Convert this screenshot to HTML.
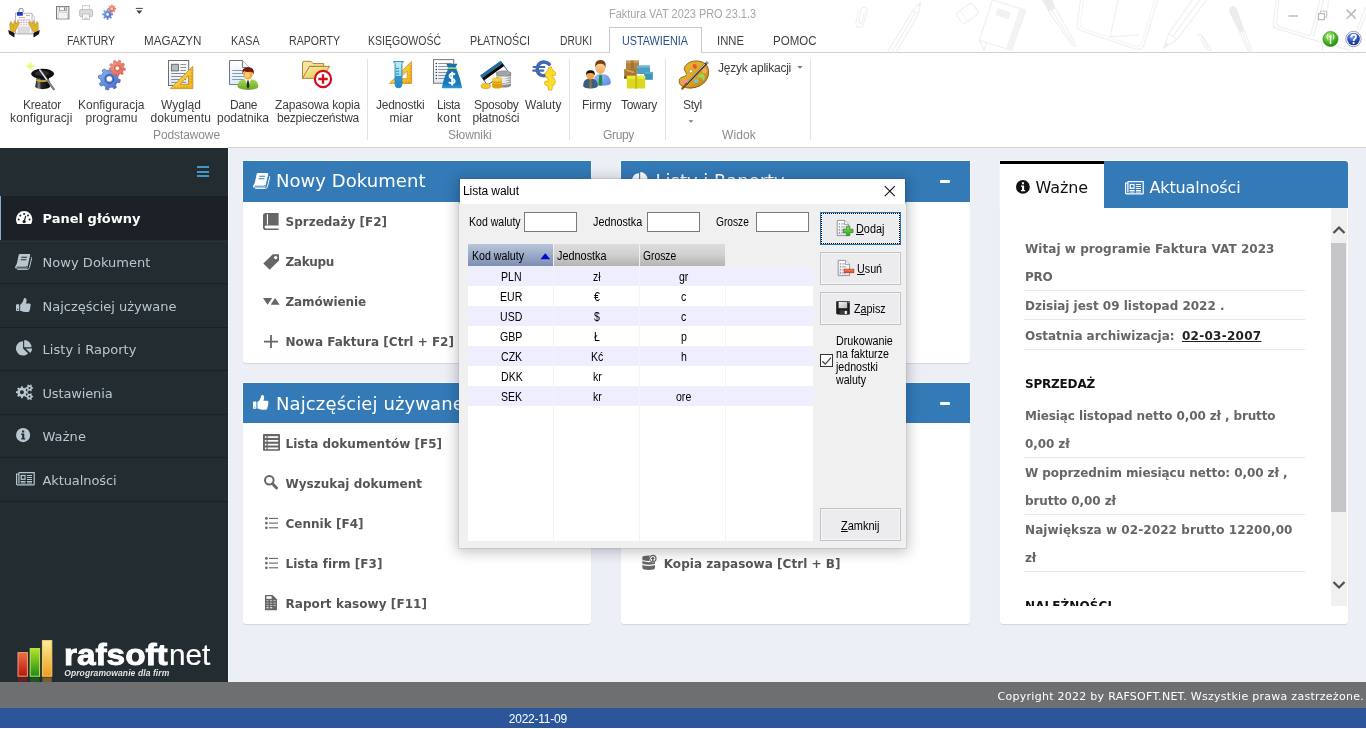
<!DOCTYPE html>
<html lang="pl">
<head>
<meta charset="utf-8">
<title>Faktura VAT 2023 PRO 23.1.3</title>
<style>
html,body{margin:0;padding:0}
body{width:1366px;height:729px;overflow:hidden;position:relative;background:#fff;font-family:"Liberation Sans",sans-serif;font-size:12px}
div,span,svg,i,b{position:absolute;box-sizing:border-box}
.t{white-space:nowrap;line-height:1}
.t u{position:static}
svg{overflow:visible}
#ribbon{left:0;top:0;width:1366px;height:148px;background:#fff}
#tabline{left:0;top:52px;width:1366px;height:1px;background:#d2d2d2}
#acttab{left:609px;top:27px;width:93px;height:26px;background:#fff;border:1px solid #c9c9c9;border-bottom:none}
.gsep{top:59px;width:1px;height:81px;background:#e2e2e2}
#ribbot{left:228px;top:147px;width:1138px;height:1px;background:#d4d4d4}
#side{left:0;top:148px;width:228px;height:534px;background:#222c31}
#side .act{left:0;top:48px;width:228px;height:44.4px;background:#1b2126;border-left:1.2px solid #86aec6}
#side .ln{left:0;width:228px;height:1px;background:#1a2226}
#side .bar{left:197px;width:12px;height:2px;background:#4596c6}
#main{left:228px;top:148px;width:1138px;height:534px;background:#edeff6;border-left:1px solid #f6f8fc}
#foot{left:0;top:682px;width:1366px;height:26px;background:#6e6f71}
#stat{left:0;top:708px;width:1366px;height:20px;background:#2b579a}
.box{background:#fff;border-radius:0 0 3px 3px;box-shadow:0 1px 1px rgba(0,0,0,.1)}
.bh{left:0;top:0;width:100%;height:41px;background:#337ab7;border-radius:0;box-shadow:0 -1px 0 rgba(255,255,255,.55),-1px 0 0 rgba(255,255,255,.4),1px 0 0 rgba(255,255,255,.4)}
.minus{top:18.6px;width:10px;height:3px;background:#fff;border-radius:1px}
.sep{left:1024px;width:281px;height:1px;background:#e6e6ea}
#dlg{left:459px;top:179px;width:447px;height:369px;background:linear-gradient(rgba(40,60,90,.35) 25px,#f0f0f0 25px);box-shadow:0 0 0 1px rgba(60,60,80,.10),0 2px 13px 2px rgba(0,0,20,.24)}
#dlg .tb{left:1px;top:0;width:445px;height:25px;background:#fff}
.inp{top:33px;width:53px;height:20px;background:#fff;border:1px solid #7a7a7a}
  .hd{top:65px;height:22px;width:85px;background:linear-gradient(#dcdcdc,#d2d2d2 45%,#b4b4b4);}
.hd.sel{background:linear-gradient(#bac6da,#9aaac6 50%,#7c8eb2)}
#grid{left:9px;top:87px;width:345px;height:275px;background:#fff;overflow:hidden}
.row{left:0;width:345px;height:20px;background:#eeeeff}
.vl{top:0;width:1px;height:275px;background:#f3f3f6}
.btn{left:361px;width:81px;height:33px;background:#ececee;border:1px solid #c2c2c6;box-shadow:inset 0 0 0 1px #f6f6f8}
.btn.foc{border:1px solid #1c74c4;box-shadow:none}
.btn.foc:after{content:"";position:absolute;left:0;top:0;right:0;bottom:0;border:1px dotted #000;background:none}

</style>
</head>
<body>
<div id="ribbon">
  <div id="tabline"></div>
  <div id="acttab"></div>
  <div class="gsep" style="left:367px"></div>
  <div class="gsep" style="left:569px"></div>
  <div class="gsep" style="left:665px"></div>
  <div class="gsep" style="left:810px"></div>
  <div id="ribbot"></div>
</div>
<div id="side">
  <div class="bar" style="top:18px"></div><div class="bar" style="top:22.5px"></div><div class="bar" style="top:27px"></div>
  <div class="act"></div>
  <div class="ln" style="top:93px;background:#2a343a"></div>
  <div class="ln" style="top:135px"></div>
  <div class="ln" style="top:179px"></div>
  <div class="ln" style="top:222px"></div>
  <div class="ln" style="top:266px"></div>
  <div class="ln" style="top:309px"></div>
  <div class="ln" style="top:353px"></div>
</div>
<div id="main"></div>
<div class="box" style="left:243px;top:161px;width:348px;height:202px"><div class="bh"></div></div>
<div class="box" style="left:243px;top:383px;width:348px;height:241px"><div class="bh" style="height:40px"></div></div>
<div class="box" style="left:621px;top:161px;width:349px;height:202px"><div class="bh"></div><div class="minus" style="left:319px"></div></div>
<div class="box" style="left:621px;top:383px;width:349px;height:241px"><div class="bh" style="height:40px"></div><div class="minus" style="left:319px"></div></div>
<div class="box" style="left:1000px;top:161px;width:348px;height:462.5px;background:#fff;border-radius:0 3px 3px 3px">
  <div class="bh" style="height:47px;border-radius:0 3px 0 0"></div>
  <div style="left:0;top:0;width:104px;height:47px;background:#fff;border-top:3px solid #000"></div>
  <div style="left:331px;top:47px;width:16px;height:398px;background:#f0f0f0"></div>
  <div style="left:331px;top:82px;width:15px;height:269px;background:#c6c6c9"></div>
</div>
<div class="sep" style="top:290px"></div>
<div class="sep" style="top:319px"></div>
<div class="sep" style="top:349px"></div>
<div class="sep" style="top:457px"></div>
<div class="sep" style="top:514px"></div>
<div class="sep" style="top:571px"></div>
<div id="foot"></div>
<div id="stat"></div>
<svg style="left:15.9px;top:211px" width="16.3" height="13" viewBox="0 0 16.3 13"><path d="M1.3,13 C0.45,11.7 0,10.1 0,8.2 A8.15,8.15 0 0 1 16.3,8.2 C16.3,10.1 15.85,11.7 15,13 Z" fill="#fff"/><g fill="#1b2126"><circle cx="2.7" cy="8.6" r="1"/><circle cx="4.3" cy="4.6" r="1"/><circle cx="8.15" cy="2.9" r="1"/><circle cx="12" cy="4.6" r="1"/><circle cx="13.6" cy="8.6" r="1"/><circle cx="8.15" cy="10.6" r="1.6"/></g><path d="M8.15,10.6 L9.6,5.4" stroke="#1b2126" stroke-width="1.2" stroke-linecap="round"/></svg>
<svg style="left:15.2px;top:254px" width="17" height="16" viewBox="0 0 17 16"><path d="M4.9,0 H14.4 Q15.5,0 15.2,1.1 L12.4,13.4 Q12.1,14.6 10.9,14.6 H1.2 Q-0.2,14.6 0.1,13.2 Q0.3,12.3 0.9,11.6 Q1.6,10.4 2,9 L3.6,1.2 Q3.9,0 4.9,0Z" fill="#b8c7ce"/><path d="M15.9,3.2 Q16.9,3.4 16.6,4.5 L14.4,13.6 Q14,15.4 12.2,15.4 H2.2" fill="none" stroke="#b8c7ce" stroke-width="1"/><path d="M6.3,3.3 H12 M5.7,5.8 H11.4" stroke="#222c31" stroke-width="1.1"/><path d="M1.6,13.2 H11.6 L12,12" stroke="#222c31" stroke-width="0.9" fill="none"/></svg>
<svg style="left:15.6px;top:298px" width="15.2" height="14.25" viewBox="0 0 16 15"><rect x="0" y="6.6" width="3.4" height="7.2" rx="0.5" fill="#b8c7ce"/><circle cx="1.7" cy="12" r="0.6" fill="#222c31"/><path d="M4.4,7 C6,6.6 7.6,3.6 8,1.4 Q8.3,0 9.6,0.1 Q11.1,0.4 11.2,2.2 Q11.2,4 10.3,5.8 H14.2 Q15.5,5.9 15.6,7.2 Q15.5,8 15.1,8.5 Q15.5,9.4 14.9,10.3 Q15.2,11.3 14.5,12.1 Q14.7,13.2 14,13.9 Q13.3,14.8 11.6,14.8 H9.6 Q7.4,14.7 5.6,13.8 L4.4,13.6Z" fill="#b8c7ce"/></svg>
<svg style="left:15.8px;top:339.7px" width="16.5" height="16" viewBox="0 0 16.5 16"><path d="M7.1,1.3 V8.4 L12.1,13.4 A7.1,7.1 0 1 1 7.1,1.3Z" fill="#b8c7ce"/><path d="M8.2,0 A7.3,7.3 0 0 1 15.5,7.3 H8.2Z" fill="#b8c7ce"/><path d="M9.6,8.4 H16.2 A7,7 0 0 1 14.2,13Z" fill="#b8c7ce"/></svg>
<svg style="left:15.8px;top:383.6px" width="17.5" height="16.5" viewBox="0 0 17.5 16.5"><path d="M10.40,7.23 L11.84,7.35 L11.84,9.05 L10.40,9.17 L9.76,10.70 L10.70,11.80 L9.50,13.00 L8.40,12.06 L6.87,12.70 L6.75,14.14 L5.05,14.14 L4.93,12.70 L3.40,12.06 L2.30,13.00 L1.10,11.80 L2.04,10.70 L1.40,9.17 L-0.04,9.05 L-0.04,7.35 L1.40,7.23 L2.04,5.70 L1.10,4.60 L2.30,3.40 L3.40,4.34 L4.93,3.70 L5.05,2.26 L6.75,2.26 L6.87,3.70 L8.40,4.34 L9.50,3.40 L10.70,4.60 L9.76,5.70Z M3.90,8.20 a2.0,2.0 0 1 0 4.0,0 a2.0,2.0 0 1 0 -4.0,0Z" fill="#b8c7ce" fill-rule="evenodd"/><path d="M16.09,3.15 L17.13,3.21 L17.13,4.59 L16.09,4.65 L15.45,5.77 L15.92,6.70 L14.72,7.39 L14.14,6.52 L12.86,6.52 L12.28,7.39 L11.08,6.70 L11.55,5.77 L10.91,4.65 L9.87,4.59 L9.87,3.21 L10.91,3.15 L11.55,2.03 L11.08,1.10 L12.28,0.41 L12.86,1.28 L14.14,1.28 L14.72,0.41 L15.92,1.10 L15.45,2.03Z M12.50,3.90 a1.0,1.0 0 1 0 2.0,0 a1.0,1.0 0 1 0 -2.0,0Z" fill="#b8c7ce" fill-rule="evenodd"/><path d="M16.09,11.85 L17.13,11.91 L17.13,13.29 L16.09,13.35 L15.45,14.47 L15.92,15.40 L14.72,16.09 L14.14,15.22 L12.86,15.22 L12.28,16.09 L11.08,15.40 L11.55,14.47 L10.91,13.35 L9.87,13.29 L9.87,11.91 L10.91,11.85 L11.55,10.73 L11.08,9.80 L12.28,9.11 L12.86,9.98 L14.14,9.98 L14.72,9.11 L15.92,9.80 L15.45,10.73Z M12.50,12.60 a1.0,1.0 0 1 0 2.0,0 a1.0,1.0 0 1 0 -2.0,0Z" fill="#b8c7ce" fill-rule="evenodd"/></svg>
<svg style="left:15.9px;top:427.9px" width="14.2" height="14.2" viewBox="0 0 14.2 14.2"><circle cx="7.1" cy="7.1" r="7.1" fill="#b8c7ce"/><path d="M6.1,2.3999999999999995 h2.1 v2.1 h-2.1Z M5.199999999999999,5.6 h3.1 v4.6 h1 v1.3 h-4.1 v-1.3 h1 v-3.3 h-1Z" fill="#222c31"/></svg>
<svg style="left:16px;top:471.9px" width="19" height="13.5" viewBox="0 0 19 13.5"><path d="M2.9,0.6 H18.2 V12.2 Q18.2,12.8 17.6,12.8 H1.6 Q0.6,12.8 0.6,11.8 V2 H2.9" fill="none" stroke="#b8c7ce" stroke-width="1.2"/><path d="M2.9,0.6 V11.6" stroke="#b8c7ce" stroke-width="1.2"/><rect x="4.6" y="2.9" width="5" height="5" fill="#b8c7ce"/><rect x="5.9" y="4.1" width="2.6" height="2.5" fill="#222c31"/><path d="M10.9,3.5 H16 M10.9,5.5 H16 M10.9,7.5 H16 M4.6,9.5 H9.6 M10.9,9.5 H16 M4.6,11 H9.6 M10.9,11 H16" stroke="#b8c7ce" stroke-width="1"/></svg>
<svg style="left:252.6px;top:172.6px" width="17" height="16" viewBox="0 0 17 16"><path d="M4.9,0 H14.4 Q15.5,0 15.2,1.1 L12.4,13.4 Q12.1,14.6 10.9,14.6 H1.2 Q-0.2,14.6 0.1,13.2 Q0.3,12.3 0.9,11.6 Q1.6,10.4 2,9 L3.6,1.2 Q3.9,0 4.9,0Z" fill="#fff"/><path d="M15.9,3.2 Q16.9,3.4 16.6,4.5 L14.4,13.6 Q14,15.4 12.2,15.4 H2.2" fill="none" stroke="#fff" stroke-width="1"/><path d="M6.3,3.3 H12 M5.7,5.8 H11.4" stroke="#337ab7" stroke-width="1.1"/><path d="M1.6,13.2 H11.6 L12,12" stroke="#337ab7" stroke-width="0.9" fill="none"/></svg>
<svg style="left:252.8px;top:394.9px" width="16" height="15" viewBox="0 0 16 15"><rect x="0" y="6.6" width="3.4" height="7.2" rx="0.5" fill="#fff"/><circle cx="1.7" cy="12" r="0.6" fill="#337ab7"/><path d="M4.4,7 C6,6.6 7.6,3.6 8,1.4 Q8.3,0 9.6,0.1 Q11.1,0.4 11.2,2.2 Q11.2,4 10.3,5.8 H14.2 Q15.5,5.9 15.6,7.2 Q15.5,8 15.1,8.5 Q15.5,9.4 14.9,10.3 Q15.2,11.3 14.5,12.1 Q14.7,13.2 14,13.9 Q13.3,14.8 11.6,14.8 H9.6 Q7.4,14.7 5.6,13.8 L4.4,13.6Z" fill="#fff"/></svg>
<svg style="left:632.2px;top:171.7px" width="16.5" height="16" viewBox="0 0 16.5 16"><path d="M7.1,1.3 V8.4 L12.1,13.4 A7.1,7.1 0 1 1 7.1,1.3Z" fill="#fff"/><path d="M8.2,0 A7.3,7.3 0 0 1 15.5,7.3 H8.2Z" fill="#fff"/><path d="M9.6,8.4 H16.2 A7,7 0 0 1 14.2,13Z" fill="#fff"/></svg>
<svg style="left:631px;top:394.6px" width="17.5" height="16.5" viewBox="0 0 17.5 16.5"><path d="M10.40,7.23 L11.84,7.35 L11.84,9.05 L10.40,9.17 L9.76,10.70 L10.70,11.80 L9.50,13.00 L8.40,12.06 L6.87,12.70 L6.75,14.14 L5.05,14.14 L4.93,12.70 L3.40,12.06 L2.30,13.00 L1.10,11.80 L2.04,10.70 L1.40,9.17 L-0.04,9.05 L-0.04,7.35 L1.40,7.23 L2.04,5.70 L1.10,4.60 L2.30,3.40 L3.40,4.34 L4.93,3.70 L5.05,2.26 L6.75,2.26 L6.87,3.70 L8.40,4.34 L9.50,3.40 L10.70,4.60 L9.76,5.70Z M3.90,8.20 a2.0,2.0 0 1 0 4.0,0 a2.0,2.0 0 1 0 -4.0,0Z" fill="#fff" fill-rule="evenodd"/><path d="M16.09,3.15 L17.13,3.21 L17.13,4.59 L16.09,4.65 L15.45,5.77 L15.92,6.70 L14.72,7.39 L14.14,6.52 L12.86,6.52 L12.28,7.39 L11.08,6.70 L11.55,5.77 L10.91,4.65 L9.87,4.59 L9.87,3.21 L10.91,3.15 L11.55,2.03 L11.08,1.10 L12.28,0.41 L12.86,1.28 L14.14,1.28 L14.72,0.41 L15.92,1.10 L15.45,2.03Z M12.50,3.90 a1.0,1.0 0 1 0 2.0,0 a1.0,1.0 0 1 0 -2.0,0Z" fill="#fff" fill-rule="evenodd"/><path d="M16.09,11.85 L17.13,11.91 L17.13,13.29 L16.09,13.35 L15.45,14.47 L15.92,15.40 L14.72,16.09 L14.14,15.22 L12.86,15.22 L12.28,16.09 L11.08,15.40 L11.55,14.47 L10.91,13.35 L9.87,13.29 L9.87,11.91 L10.91,11.85 L11.55,10.73 L11.08,9.80 L12.28,9.11 L12.86,9.98 L14.14,9.98 L14.72,9.11 L15.92,9.80 L15.45,10.73Z M12.50,12.60 a1.0,1.0 0 1 0 2.0,0 a1.0,1.0 0 1 0 -2.0,0Z" fill="#fff" fill-rule="evenodd"/></svg>
<svg style="left:263.2px;top:212.9px" width="15.6" height="17" viewBox="0 0 15.6 17"><path d="M3,0 H15.6 V12.6 H3 Q1.6,12.6 1.6,14.3 Q1.6,15.4 3,15.4 H15.6 V17 H2.6 Q0,17 0,14.2 V2.8 Q0,0 3,0Z" fill="#666"/><rect x="3.9" y="1.2" width="1.1" height="10.4" fill="#fff"/></svg>
<svg style="left:262.6px;top:253.8px" width="16.2" height="16" viewBox="0 0 16.2 16"><path d="M9.8,0.2 H15.4 Q16,0.2 16,0.8 V6.4 L6.7,15.7 L0.3,9.5Z" fill="#666"/><circle cx="12.6" cy="3.6" r="1.7" fill="#fff"/></svg>
<svg style="left:262.8px;top:298.3px" width="16.6" height="7" viewBox="0 0 16.6 7"><path d="M0,0 H9.2 L4.6,6.8Z M7.7,6.8 H16.6 L12.1,0Z" fill="#666"/></svg>
<svg style="left:264px;top:335px" width="14" height="13" viewBox="0 0 14 13"><path d="M7,0 V13 M0,6.7 H14" stroke="#666" stroke-width="1.8" fill="none"/></svg>
<svg style="left:262.6px;top:434px" width="17" height="16.8" viewBox="0 0 17 16.8"><rect x="0" y="0" width="17" height="16.8" rx="0.8" fill="#666"/><rect x="1.9" y="2.2" width="1.6" height="1.7" fill="#fff"/><rect x="4.7" y="2.2" width="10.5" height="1.7" fill="#fff"/><rect x="1.9" y="6.0" width="1.6" height="1.7" fill="#fff"/><rect x="4.7" y="6.0" width="10.5" height="1.7" fill="#fff"/><rect x="1.9" y="9.8" width="1.6" height="1.7" fill="#fff"/><rect x="4.7" y="9.8" width="10.5" height="1.7" fill="#fff"/><rect x="1.9" y="13.5" width="1.6" height="1.7" fill="#fff"/><rect x="4.7" y="13.5" width="10.5" height="1.7" fill="#fff"/></svg>
<svg style="left:264px;top:475.2px" width="14" height="14.5" viewBox="0 0 14 14.5"><circle cx="5.3" cy="5.3" r="4.3" fill="none" stroke="#666" stroke-width="2"/><path d="M8.6,8.8 L12.6,13" stroke="#666" stroke-width="2.8" stroke-linecap="round"/></svg>
<svg style="left:265px;top:516.8px" width="13" height="12.2" viewBox="0 0 13 12.2"><circle cx="1.4" cy="1.4" r="1.35" fill="#666"/><path d="M4,1.4 H13" stroke="#666" stroke-width="1.1"/><circle cx="1.4" cy="6.1" r="1.35" fill="#666"/><path d="M4,6.1 H13" stroke="#666" stroke-width="1.1"/><circle cx="1.4" cy="10.8" r="1.35" fill="#666"/><path d="M4,10.8 H13" stroke="#666" stroke-width="1.1"/></svg>
<svg style="left:265px;top:556.8px" width="13" height="12.2" viewBox="0 0 13 12.2"><circle cx="1.4" cy="1.4" r="1.35" fill="#666"/><path d="M4,1.4 H13" stroke="#666" stroke-width="1.1"/><circle cx="1.4" cy="6.1" r="1.35" fill="#666"/><path d="M4,6.1 H13" stroke="#666" stroke-width="1.1"/><circle cx="1.4" cy="10.8" r="1.35" fill="#666"/><path d="M4,10.8 H13" stroke="#666" stroke-width="1.1"/></svg>
<svg style="left:265px;top:594.8px" width="12" height="15.2" viewBox="0 0 12 15.2"><path d="M0.6,0 H7.6 L12,4.2 V14.6 Q12,15.2 11.4,15.2 H0.6 Q0,15.2 0,14.6 V0.6 Q0,0 0.6,0Z" fill="#666"/><rect x="1.4" y="1.3" width="5.2" height="2.5" fill="#fff"/><rect x="1.4" y="5.0" width="2.2" height="1.1" fill="#fff" opacity="0.55"/><rect x="5.0" y="5.0" width="2.2" height="1.1" fill="#fff" opacity="0.55"/><rect x="8.5" y="5.0" width="2.2" height="1.1" fill="#fff" opacity="0.55"/><rect x="1.4" y="7.6" width="2.2" height="1.1" fill="#fff" opacity="0.55"/><rect x="5.0" y="7.6" width="2.2" height="1.1" fill="#fff" opacity="0.55"/><rect x="8.5" y="7.6" width="2.2" height="1.1" fill="#fff" opacity="0.55"/><rect x="1.4" y="10.0" width="2.2" height="1.1" fill="#fff" opacity="0.55"/><rect x="5.0" y="10.0" width="2.2" height="1.1" fill="#fff" opacity="0.55"/><rect x="8.5" y="10.0" width="2.2" height="1.1" fill="#fff" opacity="0.55"/><rect x="1.4" y="12.2" width="2.2" height="1.1" fill="#fff" opacity="0.9"/><rect x="5.0" y="12.2" width="2.2" height="1.1" fill="#fff" opacity="0.9"/></svg>
<svg style="left:642.4px;top:554.6px" width="14.6" height="15.2" viewBox="0 0 14.6 15.2"><path d="M0.4,2.2 Q0.4,0.4 6.6,0.4 Q13,0.4 13,2.2 V12.8 Q13,15 6.6,15 Q0.4,15 0.4,12.8Z" fill="#666"/><path d="M0.4,5.6 Q6.6,7.6 13,5.6 M0.4,9.4 Q6.6,11.4 13,9.4" stroke="#fff" stroke-width="1.1" fill="none"/><circle cx="10.8" cy="3.6" r="3.9" fill="#fff"/><circle cx="10.8" cy="3.6" r="3.2" fill="none" stroke="#666" stroke-width="1.2"/><path d="M10.8,1.5 L13,3.9 H11.6 V5.9 H10 V3.9 H8.6Z" fill="#666"/></svg>
<svg style="left:1015.5px;top:180px" width="13.8" height="13.8" viewBox="0 0 13.8 13.8"><circle cx="6.9" cy="6.9" r="6.9" fill="#111"/><path d="M5.9,2.2 h2.1 v2.1 h-2.1Z M5.0,5.4 h3.1 v4.6 h1 v1.3 h-4.1 v-1.3 h1 v-3.3 h-1Z" fill="#fff"/></svg>
<svg style="left:1125px;top:180.6px" width="19" height="13.5" viewBox="0 0 19 13.5"><path d="M2.9,0.6 H18.2 V12.2 Q18.2,12.8 17.6,12.8 H1.6 Q0.6,12.8 0.6,11.8 V2 H2.9" fill="none" stroke="#fff" stroke-width="1.2"/><path d="M2.9,0.6 V11.6" stroke="#fff" stroke-width="1.2"/><rect x="4.6" y="2.9" width="5" height="5" fill="#fff"/><rect x="5.9" y="4.1" width="2.6" height="2.5" fill="#337ab7"/><path d="M10.9,3.5 H16 M10.9,5.5 H16 M10.9,7.5 H16 M4.6,9.5 H9.6 M10.9,9.5 H16 M4.6,11 H9.6 M10.9,11 H16" stroke="#fff" stroke-width="1"/></svg>
<svg style="left:1332px;top:225px" width="14" height="10" viewBox="0 0 14 10"><path d="M1.5,8 L7,2.5 L12.5,8" fill="none" stroke="#505050" stroke-width="2.2"/></svg>
<svg style="left:1332px;top:580px" width="14" height="10" viewBox="0 0 14 10"><path d="M1.5,2 L7,7.5 L12.5,2" fill="none" stroke="#505050" stroke-width="2.2"/></svg>
<svg style="left:0px;top:0px" width="1366" height="52" viewBox="0 0 1366 52"><path d="M858.4,9.4 L856,22.6 Q855.6,27.6 859.4,27.8 Q862.6,27.6 863.6,23.6 L867.2,10.6 Q867.6,7.4 864.6,7 Q861.6,7 861,10 L858.8,21.6 Q858.8,23.8 860.4,23.8 Q861.8,23.6 862.2,21.8 L864.4,12" fill="none" stroke="#efefef" stroke-width="1.1" stroke-linecap="round" stroke-linejoin="round"/><path d="M920.6,2.2 L912.6,11 L887.6,52 M920.6,2.2 L918.6,13.6 L896.4,52 M912.6,11 L918.6,13.6 M915.6,12.2 L892,52" fill="none" stroke="#efefef" stroke-width="1.1" stroke-linecap="round" stroke-linejoin="round"/><path d="M920.6,2.2 L917.6,5.6 L919.8,6.6 Z" fill="#ededed"/><g transform="rotate(-35 967.4 13.4)"><rect x="957.6" y="6.8" width="19.6" height="13.2" rx="3" fill="none" stroke="#efefef" stroke-width="1.1" stroke-linecap="round" stroke-linejoin="round"/><path d="M963,6.8 V20" fill="none" stroke="#f3f3f3" stroke-width="1" stroke-linecap="round" stroke-linejoin="round"/></g><path d="M992.4,0 L979.2,40.2 L1011.8,50.6 L1025.4,10.2 L994,0.4" fill="none" stroke="#efefef" stroke-width="1.1" stroke-linecap="round" stroke-linejoin="round"/><path d="M1019.6,8.4 L1025.4,10.2 L1011.8,50.6 L1006,48.8 Z" fill="#f3f3f3"/><path d="M997.6,8 L1010.6,12.2 L1008.8,19.4 L995.6,15 Z" fill="#f2f2f2"/><path d="M979.2,40.2 L984,50.4 L986.6,42.6" fill="none" stroke="#efefef" stroke-width="1.1" stroke-linecap="round" stroke-linejoin="round"/><path d="M1042,0 L1052.4,0 L1055.6,8.6 L1048.6,11.6 Z" fill="#ececec"/><path d="M1048.6,11.6 L1071.4,44 L1075.4,46.6 L1074.4,41.6 L1055.6,8.6 M1051.6,10.2 L1073,43" fill="none" stroke="#efefef" stroke-width="1.1" stroke-linecap="round" stroke-linejoin="round"/><path d="M1020,8 L1025.6,12 L1020.6,26" fill="none" stroke="#f3f3f3" stroke-width="1" stroke-linecap="round" stroke-linejoin="round"/><path d="M1080.4,0 L1077.2,25 Q1076.8,29.4 1081,30.6 L1135.6,49 Q1141.6,50.6 1144,45 L1157.6,0" fill="none" stroke="#efefef" stroke-width="1.1" stroke-linecap="round" stroke-linejoin="round"/><path d="M1083.4,0 L1080.4,24.6 Q1080.2,27.6 1083.4,28.6 L1135.4,46 Q1140,47.2 1141.8,43 L1154.6,0" fill="none" stroke="#f3f3f3" stroke-width="1" stroke-linecap="round" stroke-linejoin="round"/><path d="M1118,0 L1110.2,36.8 M1110.2,36.8 L1138,35" fill="none" stroke="#efefef" stroke-width="1.1" stroke-linecap="round" stroke-linejoin="round"/><path d="M1192.4,0 L1168.6,33.6 L1163.4,48.4 L1176.8,39.8 L1206.6,0 M1168.6,33.6 L1176.8,39.8 M1199.6,0 L1172.8,36.6" fill="none" stroke="#efefef" stroke-width="1.1" stroke-linecap="round" stroke-linejoin="round"/><path d="M1163.4,48.4 L1165.6,42 L1169.4,44.6 Z" fill="#ededed"/><path d="M1198,36 Q1196.4,33.8 1199.4,34.2 Q1202,34.6 1204,38 L1210.6,48.6 Q1211.4,50.8 1209,50.4 Q1206.8,50 1205.2,47.4 L1200,38.6 M1201.6,36.6 L1208,47.6" fill="none" stroke="#efefef" stroke-width="1.1" stroke-linecap="round" stroke-linejoin="round"/><path d="M1229.4,8.6 Q1230.6,5.4 1234,6.2 Q1236.6,7 1237.6,10.4 L1244.6,31 L1239.6,33 L1229.8,13.6 Q1228.8,11 1229.4,8.6 Z" fill="#ececec"/><path d="M1239.6,33 L1248.8,52 M1244.6,31 L1252.4,52 M1242,32 L1250.4,52" fill="none" stroke="#efefef" stroke-width="1.1" stroke-linecap="round" stroke-linejoin="round"/><path d="M1276,0 L1273.4,24 Q1273.2,27.4 1276.6,28.6 L1322,42.4 L1350,50.4 M1278.8,0 L1276.4,23.6 Q1276.4,25.6 1278.6,26.4 L1310.4,36 L1320,0 M1313.4,36.6 L1323.4,0 M1322,42.4 L1322.6,52 M1328.4,0 L1327,20 M1366,14 L1352,50 M1366,6 L1349.6,48.6" fill="none" stroke="#efefef" stroke-width="1.1" stroke-linecap="round" stroke-linejoin="round"/></svg>
<svg style="left:0px;top:0px" width="1366" height="148" viewBox="0 0 1366 148"><defs>
<linearGradient id="gBlue" x1="0" y1="0" x2="1" y2="1"><stop offset="0" stop-color="#8cc4f0"/><stop offset=".5" stop-color="#5f8fdc"/><stop offset="1" stop-color="#4a5fc0"/></linearGradient>
<linearGradient id="gRed" x1="0" y1="0" x2="1" y2="1"><stop offset="0" stop-color="#f4a090"/><stop offset="1" stop-color="#e0604c"/></linearGradient>
<linearGradient id="gPaper" x1="0" y1="0" x2="0" y2="1"><stop offset="0" stop-color="#ffffff"/><stop offset="1" stop-color="#dfeaf6"/></linearGradient>
<linearGradient id="gYel" x1="0" y1="0" x2="1" y2="1"><stop offset="0" stop-color="#fbe070"/><stop offset="1" stop-color="#eeb410"/></linearGradient>
<linearGradient id="gFold" x1="0" y1="0" x2="1" y2="1"><stop offset="0" stop-color="#fbeeb0"/><stop offset="1" stop-color="#f0bf3c"/></linearGradient>
<linearGradient id="gHat" x1="0" y1="0" x2="1" y2="0"><stop offset="0" stop-color="#0c0c0c"/><stop offset=".25" stop-color="#8a8a8a"/><stop offset=".4" stop-color="#2a2a2a"/><stop offset="1" stop-color="#050505"/></linearGradient>
<linearGradient id="gTube" x1="0" y1="0" x2="0" y2="1"><stop offset="0" stop-color="#c8ecfa"/><stop offset=".55" stop-color="#8fd8f4"/><stop offset=".56" stop-color="#2f97d8"/><stop offset="1" stop-color="#2a86c4"/></linearGradient>
<linearGradient id="gBag" x1="0" y1="0" x2="0" y2="1"><stop offset="0" stop-color="#1c6ea8"/><stop offset=".8" stop-color="#1a7cbc"/><stop offset="1" stop-color="#2c9ad8"/></linearGradient>
<linearGradient id="gSil" x1="0" y1="0" x2="1" y2="0"><stop offset="0" stop-color="#8a8a8a"/><stop offset=".5" stop-color="#e8e8e8"/><stop offset="1" stop-color="#7c7c7c"/></linearGradient>
<linearGradient id="gGold" x1="0" y1="0" x2="0" y2="1"><stop offset="0" stop-color="#f8d040"/><stop offset="1" stop-color="#e0a010"/></linearGradient>
<linearGradient id="gFace" x1="0" y1="0" x2="0" y2="1"><stop offset="0" stop-color="#fbe0b0"/><stop offset="1" stop-color="#f2a654"/></linearGradient>
<linearGradient id="gShirt" x1="0" y1="0" x2="1" y2="1"><stop offset="0" stop-color="#9cc0f4"/><stop offset="1" stop-color="#5c8ae4"/></linearGradient>
<linearGradient id="gGreen" x1="0" y1="0" x2="0" y2="1"><stop offset="0" stop-color="#a8d858"/><stop offset="1" stop-color="#6aa828"/></linearGradient>
<radialGradient id="gGrnBall" cx=".4" cy=".3" r=".8"><stop offset="0" stop-color="#b8f080"/><stop offset=".5" stop-color="#4cb828"/><stop offset="1" stop-color="#1c7a10"/></radialGradient>
<radialGradient id="gBluBall" cx=".4" cy=".3" r=".8"><stop offset="0" stop-color="#88a8f0"/><stop offset=".5" stop-color="#2c50c0"/><stop offset="1" stop-color="#142c80"/></radialGradient>
<linearGradient id="gPal" x1="0" y1="0" x2="1" y2="1"><stop offset="0" stop-color="#e8b838"/><stop offset=".5" stop-color="#e0a828"/><stop offset="1" stop-color="#b87818"/></linearGradient>
</defs><path d="M19,12 V10.4 A2.1,2.1 0 0 1 23.2,10.4 V12" fill="none" stroke="#8a8a8a" stroke-width="1"/><path d="M18.2,14.5 H32 L34.6,16.8 V34 H17 Z" fill="#f4f4f4" stroke="#b0b0b0" stroke-width=".6"/><rect x="15.4" y="13.2" width="16.6" height="20.6" fill="#fff" stroke="#9a9aa8" stroke-width=".7"/><rect x="17" y="12" width="5.8" height="3.8" rx=".5" fill="#1c3ccc"/><path d="M19,17.6 H25 M26,15.6 H30" stroke="#9a9a9a" stroke-width=".8"/><rect x="17.4" y="19.4" width="12.8" height="7" fill="#d8b0c8"/><path d="M17.4,21.4 H30.2 M17.4,23.4 H30.2 M17.4,25.2 H30.2 M20,19.4 V26.4 M22.6,19.4 V26.4 M25.2,19.4 V26.4 M27.8,19.4 V26.4" stroke="#fff" stroke-width=".9"/><path d="M17.4,28 H30 M17.4,30 H30 M17.4,32 H30" stroke="#b8b8b8" stroke-width="1"/><path d="M10.2,31.6 L9.8,24 Q10,21.6 11.6,21.8 L13,26 L14.4,20.4 L16,24 L17.6,21.4 L19.6,22.6 L15.8,30 L14,32.4 Z" fill="#e0b428" stroke="#a8821c" stroke-width=".5"/><path d="M38,31.6 L38.2,24 Q38,21.6 36.6,21.8 L35.2,26 L33.8,20.4 L32.2,24 L30.4,21.4 L28.4,22.6 L32.2,30 L34,32.4 Z" fill="#e0b428" stroke="#a8821c" stroke-width=".5"/><path d="M8.2,30 L14.6,33 L14.4,37.6 L9,34 Z" fill="#141414"/><path d="M39.8,30 L33.4,33 L33.6,37.6 L39,34 Z" fill="#141414"/><rect x="56.5" y="6.5" width="12.4" height="12.4" fill="#e8e8e8" stroke="#7c7c7c" stroke-width="1"/><rect x="59.4" y="6.9" width="7" height="3.8" fill="#fdfdfd" stroke="#8c8c8c" stroke-width=".7"/><rect x="64" y="7.4" width="1.3" height="2.8" fill="#8a8a8a"/><rect x="58.4" y="12.6" width="8.8" height="6" fill="#f4f4f4" stroke="#c8c8c8" stroke-width=".5"/><rect x="82.6" y="5.4" width="7" height="5" fill="#fbfbfb" stroke="#c4c4c4" stroke-width=".8"/><rect x="79.6" y="9.6" width="13" height="7" rx="1.4" fill="#dcdcdc" stroke="#b4b4b4" stroke-width=".8"/><rect x="82.6" y="14" width="7" height="5.4" fill="#f8f8f8" stroke="#b8b8b8" stroke-width=".8"/><path d="M84,19 L86,16.4 L88,19" fill="#d0d0d0"/><path d="M111.14,13.77 L112.76,13.79 L112.76,15.01 L111.14,15.03 L110.55,16.46 L111.68,17.62 L110.82,18.48 L109.66,17.35 L108.23,17.94 L108.21,19.56 L106.99,19.56 L106.97,17.94 L105.54,17.35 L104.38,18.48 L103.52,17.62 L104.65,16.46 L104.06,15.03 L102.44,15.01 L102.44,13.79 L104.06,13.77 L104.65,12.34 L103.52,11.18 L104.38,10.32 L105.54,11.45 L106.97,10.86 L106.99,9.24 L108.21,9.24 L108.23,10.86 L109.66,11.45 L110.82,10.32 L111.68,11.18 L110.55,12.34Z M106.00,14.40 a1.6,1.6 0 1 0 3.2,0 a1.6,1.6 0 1 0 -3.2,0Z" fill="url(#gBlue)" fill-rule="evenodd" stroke="#4c64c0" stroke-width=".4"/><path d="M114.56,8.33 L115.87,8.33 L115.87,9.27 L114.56,9.27 L114.12,10.34 L115.04,11.28 L114.38,11.94 L113.44,11.02 L112.37,11.46 L112.37,12.77 L111.43,12.77 L111.43,11.46 L110.36,11.02 L109.42,11.94 L108.76,11.28 L109.68,10.34 L109.24,9.27 L107.93,9.27 L107.93,8.33 L109.24,8.33 L109.68,7.26 L108.76,6.32 L109.42,5.66 L110.36,6.58 L111.43,6.14 L111.43,4.83 L112.37,4.83 L112.37,6.14 L113.44,6.58 L114.38,5.66 L115.04,6.32 L114.12,7.26Z M110.70,8.80 a1.2,1.2 0 1 0 2.4,0 a1.2,1.2 0 1 0 -2.4,0Z" fill="url(#gRed)" fill-rule="evenodd" stroke="#d86050" stroke-width=".4"/><path d="M135.8,8.4 H142.8" stroke="#444" stroke-width="1"/><path d="M136.3,10.6 H142.3 L139.3,14 Z" fill="#444"/><path d="M1288.5,16 H1298" stroke="#bababa" stroke-width="1.4"/><path d="M1320.5,13.2 V11.2 H1326.5 V17.2 H1324.5" fill="none" stroke="#c4c4c4" stroke-width="1"/><rect x="1318.4" y="13.6" width="6" height="6" fill="none" stroke="#bababa" stroke-width="1.2"/><path d="M1346.6,9.6 L1355.8,18.8 M1355.8,9.6 L1346.6,18.8" stroke="#bababa" stroke-width="1.5"/><circle cx="1330.5" cy="39" r="7.6" fill="url(#gGrnBall)" stroke="#2c8a1c" stroke-width=".6"/><path d="M1330.5,37 V44" stroke="#fff" stroke-width="1.5"/><circle cx="1330.5" cy="36.4" r="1.1" fill="#fff"/><path d="M1327.8,34.4 Q1326.2,36.8 1327.8,39.4 M1333.2,34.4 Q1334.8,36.8 1333.2,39.4" stroke="#fff" stroke-width="1" fill="none"/><circle cx="1353.5" cy="39" r="7.7" fill="#fff" stroke="#98a0c4" stroke-width="1"/><circle cx="1353.5" cy="39" r="6.3" fill="url(#gBluBall)"/><path d="M1351.2,37 Q1351.2,34.2 1353.6,34.2 Q1356,34.2 1356,36.4 Q1356,37.8 1354.6,38.6 Q1353.6,39.2 1353.6,40.6" stroke="#fff" stroke-width="1.8" fill="none" transform="translate(0,.4)"/><circle cx="1353.6" cy="43" r="1.1" fill="#fff"/><path d="M688.6,120.2 H693.4 L691,122.8 Z" fill="#777"/><path d="M797.4,66 H802.6 L800,68.8 Z" fill="#777"/><path d="M30.5,61.6 L31.6,65 L35,66.2 L31.6,67.4 L30.5,70.8 L29.4,67.4 L26,66.2 L29.4,65 Z" fill="#e4f060" opacity=".95"/><circle cx="30.5" cy="66.2" r="3.4" fill="#f4fa90" opacity=".5"/><path d="M33,63 L33.5,64.6 L35.2,65.1 L33.5,65.6 L33,67.2" fill="#eef888" opacity=".6"/><path d="M36.6,77.6 L35.3,86.6 Q35.6,88.8 42.6,89.2 Q49.6,88.8 50,86.6 L48.8,77.6 Z" fill="url(#gHat)"/><path d="M36.4,79.2 Q42.6,81.2 49,79.2 L49.2,81 Q42.6,83 36.2,81 Z" fill="#ccb030"/><ellipse cx="42.6" cy="73.8" rx="11.5" ry="5.1" fill="#101010"/><ellipse cx="42" cy="73.4" rx="7" ry="2.6" fill="#2e2e2e"/><path d="M39.6,69.6 L54.2,89.8" stroke="#555" stroke-width="2"/><path d="M39.4,69.4 L47,80" stroke="#e8e8e8" stroke-width="1.3"/><path d="M47,80 L54,89.6" stroke="#9a9a9a" stroke-width="1"/><path d="M118.00,78.94 L120.37,79.71 L119.74,82.67 L117.26,82.40 L115.42,85.08 L116.56,87.30 L114.02,88.95 L112.45,87.01 L109.26,87.60 L108.49,89.97 L105.53,89.34 L105.80,86.86 L103.12,85.02 L100.90,86.16 L99.25,83.62 L101.19,82.05 L100.60,78.86 L98.23,78.09 L98.86,75.13 L101.34,75.40 L103.18,72.72 L102.04,70.50 L104.58,68.85 L106.15,70.79 L109.34,70.20 L110.11,67.83 L113.07,68.46 L112.80,70.94 L115.48,72.78 L117.70,71.64 L119.35,74.18 L117.41,75.75Z M106.10,78.90 a3.2,3.2 0 1 0 6.4,0 a3.2,3.2 0 1 0 -6.4,0Z" fill="url(#gBlue)" fill-rule="evenodd" stroke="#4a60b8" stroke-width=".7" stroke-linejoin="round"/><circle cx="109.3" cy="78.9" r="4.2" fill="none" stroke="#3c4cb0" stroke-width="1.1"/><path d="M123.59,67.93 L125.40,68.35 L125.13,70.29 L123.28,70.19 L122.29,72.04 L123.41,73.52 L121.95,74.83 L120.60,73.57 L118.66,74.35 L118.56,76.20 L116.60,76.27 L116.38,74.43 L114.39,73.79 L113.12,75.14 L111.58,73.93 L112.59,72.38 L111.48,70.60 L109.64,70.83 L109.23,68.91 L111.00,68.37 L111.29,66.30 L109.74,65.29 L110.66,63.56 L112.37,64.28 L113.92,62.88 L113.38,61.11 L115.20,60.38 L116.04,62.03 L118.13,61.95 L118.85,60.25 L120.72,60.86 L120.30,62.66 L121.95,63.95 L123.60,63.11 L124.64,64.77 L123.16,65.88Z M115.10,68.20 a2.2,2.2 0 1 0 4.4,0 a2.2,2.2 0 1 0 -4.4,0Z" fill="url(#gRed)" fill-rule="evenodd" stroke="#d05848" stroke-width=".6" stroke-linejoin="round"/><circle cx="117.3" cy="68.2" r="3" fill="none" stroke="#d85c48" stroke-width=".8"/><rect x="168.5" y="60.5" width="20.2" height="25" fill="url(#gPaper)" stroke="#66707c" stroke-width="1"/><rect x="171.4" y="64.3" width="7" height="6.6" fill="#b4bcbc" stroke="#666" stroke-width=".9"/><path d="M180.4,64.6 H186 M180.4,67.5 H186 M180.4,70.5 H186 M171.2,73.5 H186 M171.2,76.5 H186 M171.2,79.5 H186 M171.2,82.4 H186" stroke="#8c8c90" stroke-width="1"/><path d="M192.8,66.3 V88.6 H170.3 Z M188.6,75.6 V84.3 H180 Z" fill="url(#gYel)" fill-rule="evenodd" stroke="#c48a18" stroke-width=".8"/><path d="M190.6,70 H192.6 M190.6,73 H192.6 M190.6,76 H192.6 M190.6,79 H192.6 M190.6,82 H192.6 M175,86.6 V88.4 M178,86.6 V88.4 M181,86.6 V88.4 M184,86.6 V88.4 M187,86.6 V88.4" stroke="#b87818" stroke-width=".7"/><path d="M229.5,60.5 H242.4 L249.6,67.6 V84.6 H229.5 Z" fill="url(#gPaper)" stroke="#6c7884" stroke-width="1"/><path d="M242.4,60.5 V67.6 H249.6" fill="#f4f8fc" stroke="#6c7884" stroke-width="1"/><path d="M232.2,70.5 H244 M232.2,73.5 H244 M232.2,76.5 H244 M232.2,79.5 H244" stroke="#7c9cbc" stroke-width="1.1"/><path d="M237.6,86.6 Q237.6,79.6 245,79.2 L251,79.2 Q258.2,79.6 258.2,86.6 Q258.2,89.6 248,89.9 Q237.6,89.6 237.6,86.6 Z" fill="url(#gGreen)"/><path d="M244.6,79 L248,85.6 L251.4,79 Z" fill="#fff"/><path d="M247.3,80.6 H248.7 L249.3,86.6 L248,88.8 L246.7,86.6 Z" fill="#1c2a1c"/><ellipse cx="248" cy="74.2" rx="4.7" ry="5.4" fill="#f4a838"/><ellipse cx="247.4" cy="75" rx="2.6" ry="3" fill="#fbd070"/><path d="M242.4,74 Q241.4,67.2 248,67.2 Q255,67.2 253.8,74.4 Q252.6,71 249.6,71.8 Q246,72.2 244.4,71 Q243,72 242.4,74 Z" fill="#741410"/><path d="M302.5,78.3 V63 Q302.5,61.3 304.2,61.3 H311 L313,63.6 H323.7 V66.4 H309.6 Q308,70 306.4,73 Q304.8,76 303.8,78.3 Z" fill="#f8e49c" stroke="#9c7c2c" stroke-width=".9"/><path d="M309.6,66.4 H329.8 L327.6,69.6 L322.4,78.3 H302.6 Q306,72 309.6,66.4 Z" fill="url(#gFold)" stroke="#9c7c2c" stroke-width=".9"/><circle cx="323" cy="79" r="8.1" fill="#fff" stroke="#d01020" stroke-width="2.2"/><path d="M318.3,79 H327.7 M323,74.3 V83.7" stroke="#d01020" stroke-width="2.3"/><path d="M411.6,61.4 V83.4 H389.4 Z M407.2,71 V78.8 H399.4 Z" fill="url(#gYel)" fill-rule="evenodd" stroke="#d88c20" stroke-width=".8"/><path d="M409.6,66 H411.4 M409.6,69 H411.4 M409.6,72 H411.4 M409.6,75 H411.4 M409.6,78 H411.4 M403,81.6 V83.2 M406,81.6 V83.2 M409,81.6 V83.2" stroke="#c07818" stroke-width=".7"/><path d="M393.4,61.6 H403.6 L401.9,63.6 V84.4 Q401.9,87.8 398.5,87.8 Q395.1,87.8 395.1,84.4 V63.6 Z" fill="url(#gTube)" stroke="#2a8cb4" stroke-width="1"/><path d="M396,68.4 H399 M396,71.2 H399 M396,74 H399" stroke="#2a8cb4" stroke-width="1"/><rect x="433.5" y="59.6" width="20.2" height="23.6" fill="url(#gPaper)" stroke="#777" stroke-width="1"/><rect x="435.7" y="62.9" width="1.2" height="1.2" fill="#222"/><path d="M438.2,63.5 H451.6" stroke="#8c9498" stroke-width="1"/><rect x="435.7" y="65.9" width="1.2" height="1.2" fill="#222"/><path d="M438.2,66.5 H451.6" stroke="#8c9498" stroke-width="1"/><rect x="435.7" y="68.9" width="1.2" height="1.2" fill="#222"/><path d="M438.2,69.5 H451.6" stroke="#8c9498" stroke-width="1"/><rect x="435.7" y="71.9" width="1.2" height="1.2" fill="#222"/><path d="M438.2,72.5 H451.6" stroke="#8c9498" stroke-width="1"/><rect x="435.7" y="74.9" width="1.2" height="1.2" fill="#222"/><path d="M438.2,75.5 H451.6" stroke="#8c9498" stroke-width="1"/><rect x="435.7" y="77.9" width="1.2" height="1.2" fill="#222"/><path d="M438.2,78.5 H451.6" stroke="#8c9498" stroke-width="1"/><path d="M446.2,63.8 H457.4 L455.6,67.2 H448 Z" fill="#1c6ea8"/><path d="M448.2,69 H456.4 Q460.6,78 462.2,88.2 H441.8 Q443.4,78 448.2,69 Z" fill="url(#gBag)"/><path d="M448,67.4 H456.4 L457,69 H447.4 Z" fill="#2a8cc8"/><path d="M447.6,68.4 H456.8" stroke="#b4e42c" stroke-width=".9"/><path d="M456.6,68.6 L459.4,73.2" stroke="#d4ec4c" stroke-width=".9"/><path d="M455,74.6 Q452.6,72.8 450.4,74.2 Q448.6,76 450.6,77.8 L453.8,79.6 Q455.6,81.2 453.8,82.8 Q451.4,84.2 448.8,82.2 M452.2,71.8 V85.4" fill="none" stroke="#fff" stroke-width="1.9"/><path d="M480.6,75.6 L500.8,61.2 L507.6,70.8 L487.4,85.2 Z" fill="#fff" stroke="#1c6c9c" stroke-width="1"/><path d="M480.6,75.6 L500.8,61.2 L502.4,63.4 L482.2,77.8 Z" fill="#1c6c9c"/><path d="M482.2,77.8 L502.4,63.4 L504.2,66 L484,80.4 Z" fill="#0a0a0a"/><rect x="496.4" y="72" width="14.6" height="13.4" fill="url(#gSil)"/><ellipse cx="503.7" cy="85.4" rx="7.3" ry="2.2" fill="#8c8c8c"/><path d="M496.4,76.6 Q503.7,79.4 511,76.6 M496.4,78.8 Q503.7,81.6 511,78.8 M496.4,81 Q503.7,83.8 511,81 M496.4,83.2 Q503.7,86 511,83.2" stroke="#fff" stroke-width=".8" fill="none"/><ellipse cx="503.7" cy="73.4" rx="7.3" ry="2.6" fill="#a4a4a4" stroke="#7c7c7c" stroke-width=".5"/><rect x="492.2" y="79.4" width="9.8" height="7.4" fill="url(#gGold)"/><ellipse cx="497.1" cy="86.8" rx="4.9" ry="1.8" fill="#e0a010"/><path d="M492.2,82 Q497.1,84 502,82 M492.2,84.4 Q497.1,86.4 502,84.4" stroke="#c88c10" stroke-width=".7" fill="none"/><ellipse cx="497.1" cy="79.6" rx="4.9" ry="1.9" fill="#f8d440" stroke="#d8a018" stroke-width=".5"/><ellipse cx="485.8" cy="86" rx="4.8" ry="2.6" fill="#f4c428" stroke="#c89010" stroke-width=".6"/><path d="M549.2,64.2 Q546.8,61.8 543.4,62 Q537.8,62.6 537.2,69 Q537.6,75.6 543.6,75.8 Q546.4,75.8 548.2,74.2" fill="none" stroke="#4268b0" stroke-width="3.5" stroke-linecap="round"/><path d="M533.6,67 H544.4 M533.2,70.6 H543.4" stroke="#4268b0" stroke-width="2.1" stroke-linecap="round"/><path d="M553.8,73.6 Q551.2,71 548.4,72.6 Q546,74.6 548.8,77 L552,79.2 Q554.6,81.6 552.2,83.8 Q549.4,85.6 546.4,83 M550.2,69 V88.4" fill="none" stroke="#e4a428" stroke-width="4.8" stroke-linecap="round"/><path d="M553.8,73.6 Q551.2,71 548.4,72.6 Q546,74.6 548.8,77 L552,79.2 Q554.6,81.6 552.2,83.8 Q549.4,85.6 546.4,83 M550.2,69 V88.4" fill="none" stroke="#f8e028" stroke-width="3.4" stroke-linecap="round"/><path d="M593.6,84 Q593.4,75 598,74.2 H603.6 Q610.6,75 610.8,83 Q610.6,85.6 602,85.8 Q594,85.8 593.6,84 Z" fill="url(#gShirt)"/><path d="M599.2,75 H601.8 L602.4,84.6 L600.5,85.8 L598.6,84.6 Z" fill="#1c8c3c"/><ellipse cx="600.4" cy="67.4" rx="5.1" ry="6.6" fill="url(#gFace)"/><path d="M595.2,67.6 Q594.2,60 600.4,60 Q606.8,60 605.6,67.8 Q604.6,63.6 600.4,63.8 Q596.2,63.6 595.2,67.6 Z" fill="#7c3c14"/><path d="M583.2,86 Q583,80 587.4,79 H593.4 Q597.8,80 597.8,86 Q597.6,88.4 590.4,88.6 Q583.4,88.4 583.2,86 Z" fill="#3c5c80"/><path d="M589.6,79.6 H591.4 L591.8,87.4 L590.5,88.4 L589.2,87.4 Z" fill="#847c3c"/><ellipse cx="590.4" cy="75" rx="4.1" ry="4.5" fill="#f0a448"/><path d="M586.2,75 Q585.4,70.2 590.4,70.2 Q595.6,70.2 594.6,75.2 Q593.6,72.6 590.4,73 Q587.2,72.6 586.2,75 Z" fill="#101010"/><rect x="626" y="60.6" width="13" height="10" fill="#b4823c"/><rect x="626" y="60.6" width="13" height="2.6" fill="#c89c54"/><rect x="631" y="60.6" width="2.6" height="10" fill="#98642c" opacity=".6"/><rect x="624.2" y="69.2" width="12.6" height="9.4" fill="#a87434"/><rect x="624.2" y="76.4" width="7" height="2.2" fill="#6c4c1c"/><path d="M626,70 L634,72.6" stroke="#d8a85c" stroke-width="1.6"/><rect x="637" y="65.6" width="13" height="8.4" fill="#4ca0c4"/><rect x="637" y="65.6" width="13" height="2.2" fill="#6cb8d4"/><rect x="644.2" y="72" width="8.6" height="7.8" fill="#3c94b8"/><rect x="644.2" y="72" width="8.6" height="2" fill="#5cacc8"/><rect x="626.8" y="75.8" width="18.4" height="12.8" rx="1" fill="#dcd820"/><rect x="626.8" y="75.8" width="18.4" height="3" fill="#ecec3c"/><rect x="635" y="75.8" width="2.2" height="12.8" fill="#c4c010"/><path d="M679.4,79.2 Q678,84.2 683,86.6 Q690.4,90 699.4,86 Q709.2,81 708.6,71 Q708,62 698,61 Q690,60.4 685.6,65.4 Q682.6,69 685.6,72 Q688,75 684,76.6 Q680.4,77.2 679.4,79.2 Z" fill="url(#gPal)" stroke="#8c5c14" stroke-width=".9"/><path d="M683.6,86.8 Q690.6,90 699.4,86.2 Q705,83.4 707.4,78.6 Q704,84.6 697.6,86.6 Q690,88.8 683.6,86.8 Z" fill="#7c4c10" opacity=".7"/><circle cx="690.8" cy="71.2" r="1.7" fill="#fff" stroke="#8c5c14" stroke-width=".5"/><ellipse cx="694.8" cy="66.4" rx="1.9" ry="2.6" fill="#e85434" transform="rotate(-25 694.8 66.4)"/><ellipse cx="704.4" cy="71" rx="2.1" ry="2.4" fill="#f0b070"/><path d="M698.6,76.6 Q700,74 703,75 Q704.8,76.6 703.6,79.2 Q702.4,76.6 698.6,76.6 Z" fill="#94dc54" stroke="#94dc54" stroke-width="1.5"/><ellipse cx="696.4" cy="81" rx="2.5" ry="1.9" fill="#74c4dc"/><ellipse cx="684.6" cy="81.6" rx="2.8" ry="1.8" fill="#f08cb4" transform="rotate(-20 684.6 81.6)"/><path d="M707.4,62.2 L686,84.6" stroke="#2c2c2c" stroke-width="2"/><path d="M705,64 L686.4,83.4" stroke="#f4f4f4" stroke-width=".8"/><path d="M706,61.8 L708.4,63.6" stroke="#9a9a9a" stroke-width="2.2"/><path d="M686.6,84 L682.4,88.6" stroke="#8c4c14" stroke-width="2.2" stroke-linecap="round"/></svg>
<svg style="left:0px;top:0px" width="228" height="682" viewBox="0 0 228 682"><defs><linearGradient id="lr" x1="0" y1="0" x2="0" y2="1"><stop offset="0" stop-color="#f07048"/><stop offset="1" stop-color="#b81410"/></linearGradient><linearGradient id="lg" x1="0" y1="0" x2="0" y2="1"><stop offset="0" stop-color="#b4e428"/><stop offset="1" stop-color="#1c8c14"/></linearGradient><linearGradient id="ly" x1="0" y1="0" x2="0" y2="1"><stop offset="0" stop-color="#fcec9c"/><stop offset="1" stop-color="#f09c1c"/></linearGradient></defs><rect x="18" y="652.6" width="9.4" height="23.6" fill="url(#lr)" stroke="#f4a070" stroke-width="1"/><rect x="30.2" y="648.6" width="9.4" height="27.6" fill="url(#lg)" stroke="#c4e85c" stroke-width="1"/><rect x="42.4" y="640.6" width="9.4" height="35.6" fill="url(#ly)" stroke="#fcd06c" stroke-width="1"/><rect x="18" y="677.4" width="9.4" height="4.6" fill="#b81410" opacity=".45"/><rect x="30.2" y="677.4" width="9.4" height="4.6" fill="#1c8c14" opacity=".45"/><rect x="42.4" y="677.4" width="9.4" height="4.6" fill="#f09c1c" opacity=".45"/></svg>
<div style="left:0;top:0;width:1366px;height:729px;will-change:transform">
<span class="t" style="left:609.00px;top:7.60px;font-size:12px;color:#a6a6a6;transform:scaleX(0.9107);transform-origin:0 0;">Faktura VAT 2023 PRO 23.1.3</span>
<span class="t" style="left:67.00px;top:35.00px;font-size:12px;color:#3e3e3e;transform:scaleX(0.8707);transform-origin:0 0;">FAKTURY</span>
<span class="t" style="left:144.00px;top:35.00px;font-size:12px;color:#3e3e3e;transform:scaleX(0.9689);transform-origin:0 0;">MAGAZYN</span>
<span class="t" style="left:231.00px;top:35.00px;font-size:12px;color:#3e3e3e;transform:scaleX(0.8902);transform-origin:0 0;">KASA</span>
<span class="t" style="left:289.00px;top:35.00px;font-size:12px;color:#3e3e3e;transform:scaleX(0.8824);transform-origin:0 0;">RAPORTY</span>
<span class="t" style="left:368.00px;top:35.00px;font-size:12px;color:#3e3e3e;transform:scaleX(0.8759);transform-origin:0 0;">KSIĘGOWOŚĆ</span>
<span class="t" style="left:470.00px;top:35.00px;font-size:12px;color:#3e3e3e;transform:scaleX(0.8939);transform-origin:0 0;">PŁATNOŚCI</span>
<span class="t" style="left:560.00px;top:35.00px;font-size:12px;color:#3e3e3e;transform:scaleX(0.8569);transform-origin:0 0;">DRUKI</span>
<span class="t" style="left:622.00px;top:35.00px;font-size:12px;color:#23508f;transform:scaleX(0.8999);transform-origin:0 0;">USTAWIENIA</span>
<span class="t" style="left:717.00px;top:35.00px;font-size:12px;color:#3e3e3e;transform:scaleX(0.9417);transform-origin:0 0;">INNE</span>
<span class="t" style="left:773.00px;top:35.00px;font-size:12px;color:#3e3e3e;transform:scaleX(0.9593);transform-origin:0 0;">POMOC</span>
<span class="t" style="left:23.00px;top:99.00px;font-size:12px;color:#3e3e3e;letter-spacing:-0.194px;">Kreator</span>
<span class="t" style="left:10.00px;top:112.00px;font-size:12px;color:#3e3e3e;letter-spacing:0.150px;">konfiguracji</span>
<span class="t" style="left:78.00px;top:99.00px;font-size:12px;color:#3e3e3e;letter-spacing:-0.018px;">Konfiguracja</span>
<span class="t" style="left:85.50px;top:112.00px;font-size:12px;color:#3e3e3e;letter-spacing:0.080px;">programu</span>
<span class="t" style="left:161.00px;top:99.00px;font-size:12px;color:#3e3e3e;letter-spacing:0.013px;">Wygląd</span>
<span class="t" style="left:150.50px;top:112.00px;font-size:12px;color:#3e3e3e;letter-spacing:0.125px;">dokumentu</span>
<span class="t" style="left:230.00px;top:99.00px;font-size:12px;color:#3e3e3e;letter-spacing:-0.422px;">Dane</span>
<span class="t" style="left:217.00px;top:112.00px;font-size:12px;color:#3e3e3e;letter-spacing:-0.005px;">podatnika</span>
<span class="t" style="left:275.00px;top:99.00px;font-size:12px;color:#3e3e3e;letter-spacing:-0.171px;">Zapasowa kopia</span>
<span class="t" style="left:277.00px;top:112.00px;font-size:12px;color:#3e3e3e;letter-spacing:-0.242px;">bezpieczeństwa</span>
<span class="t" style="left:376.00px;top:99.00px;font-size:12px;color:#3e3e3e;letter-spacing:-0.245px;">Jednostki</span>
<span class="t" style="left:389.50px;top:112.00px;font-size:12px;color:#3e3e3e;letter-spacing:0.039px;">miar</span>
<span class="t" style="left:437.00px;top:99.00px;font-size:12px;color:#3e3e3e;letter-spacing:-0.472px;">Lista</span>
<span class="t" style="left:437.00px;top:112.00px;font-size:12px;color:#3e3e3e;letter-spacing:0.328px;">kont</span>
<span class="t" style="left:474.00px;top:99.00px;font-size:12px;color:#3e3e3e;letter-spacing:-0.315px;">Sposoby</span>
<span class="t" style="left:472.50px;top:112.00px;font-size:12px;color:#3e3e3e;letter-spacing:-0.042px;">płatności</span>
<span class="t" style="left:525.00px;top:99.00px;font-size:12px;color:#3e3e3e;letter-spacing:0.044px;">Waluty</span>
<span class="t" style="left:582.00px;top:99.00px;font-size:12px;color:#3e3e3e;letter-spacing:-0.100px;">Firmy</span>
<span class="t" style="left:621.00px;top:99.00px;font-size:12px;color:#3e3e3e;letter-spacing:-0.336px;">Towary</span>
<span class="t" style="left:683.00px;top:99.00px;font-size:12px;color:#3e3e3e;letter-spacing:-0.254px;">Styl</span>
<span class="t" style="left:718.00px;top:62.00px;font-size:12px;color:#3e3e3e;letter-spacing:-0.247px;">Język aplikacji</span>
<span class="t" style="left:153.00px;top:129.00px;font-size:12px;color:#8a8a8a;letter-spacing:-0.105px;">Podstawowe</span>
<span class="t" style="left:448.00px;top:129.00px;font-size:12px;color:#8a8a8a;letter-spacing:-0.064px;">Słowniki</span>
<span class="t" style="left:603.00px;top:129.00px;font-size:12px;color:#8a8a8a;letter-spacing:-0.338px;">Grupy</span>
<span class="t" style="left:722.00px;top:129.00px;font-size:12px;color:#8a8a8a;letter-spacing:0.131px;">Widok</span>
<span class="t" style="left:42.50px;top:212.00px;font-size:13px;color:#ffffff;font-family:'DejaVu Sans', 'Liberation Sans', sans-serif;font-weight:700;letter-spacing:0.016px;">Panel główny</span>
<span class="t" style="left:42.50px;top:256.00px;font-size:13px;color:#b8c7ce;font-family:'DejaVu Sans', 'Liberation Sans', sans-serif;letter-spacing:0.041px;">Nowy Dokument</span>
<span class="t" style="left:42.50px;top:300.00px;font-size:13px;color:#b8c7ce;font-family:'DejaVu Sans', 'Liberation Sans', sans-serif;letter-spacing:-0.007px;">Najczęściej używane</span>
<span class="t" style="left:42.50px;top:343.20px;font-size:13px;color:#b8c7ce;font-family:'DejaVu Sans', 'Liberation Sans', sans-serif;letter-spacing:0.043px;">Listy i Raporty</span>
<span class="t" style="left:42.50px;top:387.00px;font-size:13px;color:#b8c7ce;font-family:'DejaVu Sans', 'Liberation Sans', sans-serif;letter-spacing:-0.142px;">Ustawienia</span>
<span class="t" style="left:42.50px;top:430.20px;font-size:13px;color:#b8c7ce;font-family:'DejaVu Sans', 'Liberation Sans', sans-serif;letter-spacing:0.087px;">Ważne</span>
<span class="t" style="left:42.50px;top:474.00px;font-size:13px;color:#b8c7ce;font-family:'DejaVu Sans', 'Liberation Sans', sans-serif;letter-spacing:-0.097px;">Aktualności</span>
<span class="t" style="left:64.30px;top:640.60px;font-size:29px;color:#fff;font-weight:700;-webkit-text-stroke:0.9px #fff;transform:scaleX(1.1492);transform-origin:0 0;">rafsoft</span>
<span class="t" style="left:168.60px;top:640.60px;font-size:29px;color:#fff;-webkit-text-stroke:0.2px #fff;transform:scaleX(1.0266);transform-origin:0 0;">net</span>
<span class="t" style="left:64.20px;top:668.70px;font-size:8.5px;color:#e4e4e4;font-weight:700;font-style:italic;letter-spacing:0.097px;">Oprogramowanie dla firm</span>
<span class="t" style="left:276.00px;top:172.25px;font-size:18px;color:#fff;font-family:'DejaVu Sans', 'Liberation Sans', sans-serif;letter-spacing:0.053px;">Nowy Dokument</span>
<span class="t" style="left:276.00px;top:394.50px;font-size:18px;color:#fff;font-family:'DejaVu Sans', 'Liberation Sans', sans-serif;letter-spacing:0.119px;">Najczęściej używane</span>
<span class="t" style="left:655.50px;top:172.25px;font-size:18px;color:#fff;font-family:'DejaVu Sans', 'Liberation Sans', sans-serif;">Listy i Raporty</span>
<span class="t" style="left:655.50px;top:394.50px;font-size:18px;color:#fff;font-family:'DejaVu Sans', 'Liberation Sans', sans-serif;">Ustawienia</span>
<span class="t" style="left:285.50px;top:216.00px;font-size:12px;color:#555555;font-family:'DejaVu Sans', 'Liberation Sans', sans-serif;font-weight:700;">Sprzedaży [F2]</span>
<span class="t" style="left:285.50px;top:256.00px;font-size:12px;color:#555555;font-family:'DejaVu Sans', 'Liberation Sans', sans-serif;font-weight:700;letter-spacing:-0.328px;">Zakupu</span>
<span class="t" style="left:285.50px;top:296.00px;font-size:12px;color:#555555;font-family:'DejaVu Sans', 'Liberation Sans', sans-serif;font-weight:700;letter-spacing:-0.119px;">Zamówienie</span>
<span class="t" style="left:285.50px;top:336.00px;font-size:12px;color:#555555;font-family:'DejaVu Sans', 'Liberation Sans', sans-serif;font-weight:700;letter-spacing:0.012px;">Nowa Faktura [Ctrl + F2]</span>
<span class="t" style="left:285.50px;top:438.00px;font-size:12px;color:#555555;font-family:'DejaVu Sans', 'Liberation Sans', sans-serif;font-weight:700;letter-spacing:0.013px;">Lista dokumentów [F5]</span>
<span class="t" style="left:285.50px;top:478.00px;font-size:12px;color:#555555;font-family:'DejaVu Sans', 'Liberation Sans', sans-serif;font-weight:700;letter-spacing:0.006px;">Wyszukaj dokument</span>
<span class="t" style="left:285.50px;top:518.00px;font-size:12px;color:#555555;font-family:'DejaVu Sans', 'Liberation Sans', sans-serif;font-weight:700;letter-spacing:0.016px;">Cennik [F4]</span>
<span class="t" style="left:285.50px;top:558.00px;font-size:12px;color:#555555;font-family:'DejaVu Sans', 'Liberation Sans', sans-serif;font-weight:700;letter-spacing:0.037px;">Lista firm [F3]</span>
<span class="t" style="left:285.50px;top:598.00px;font-size:12px;color:#555555;font-family:'DejaVu Sans', 'Liberation Sans', sans-serif;font-weight:700;letter-spacing:0.057px;">Raport kasowy [F11]</span>
<span class="t" style="left:663.75px;top:558.00px;font-size:12px;color:#555555;font-family:'DejaVu Sans', 'Liberation Sans', sans-serif;font-weight:700;letter-spacing:0.033px;">Kopia zapasowa [Ctrl + B]</span>
<span class="t" style="left:1035.50px;top:180.00px;font-size:16px;color:#111;font-family:'DejaVu Sans', 'Liberation Sans', sans-serif;letter-spacing:-0.097px;">Ważne</span>
<span class="t" style="left:1149.50px;top:180.00px;font-size:16px;color:#fff;font-family:'DejaVu Sans', 'Liberation Sans', sans-serif;letter-spacing:-0.126px;">Aktualności</span>
<span class="t" style="left:1025.00px;top:243.00px;font-size:12px;color:#666666;font-family:'DejaVu Sans', 'Liberation Sans', sans-serif;font-weight:700;letter-spacing:0.054px;">Witaj w programie Faktura VAT 2023</span>
<span class="t" style="left:1025.00px;top:270.50px;font-size:12px;color:#666666;font-family:'DejaVu Sans', 'Liberation Sans', sans-serif;font-weight:700;letter-spacing:-0.250px;">PRO</span>
<span class="t" style="left:1025.00px;top:300.00px;font-size:12px;color:#666666;font-family:'DejaVu Sans', 'Liberation Sans', sans-serif;font-weight:700;letter-spacing:-0.011px;">Dzisiaj jest 09 listopad 2022 .</span>
<span class="t" style="left:1025.00px;top:330.00px;font-size:12px;color:#666666;font-family:'DejaVu Sans', 'Liberation Sans', sans-serif;font-weight:700;letter-spacing:-0.025px;">Ostatnia archiwizacja:</span>
<span class="t" style="left:1182.00px;top:330.00px;font-size:12px;color:#222;font-family:'DejaVu Sans', 'Liberation Sans', sans-serif;font-weight:700;text-decoration:underline;letter-spacing:0.273px;">02-03-2007</span>
<span class="t" style="left:1025.00px;top:378.00px;font-size:12px;color:#111;font-family:'DejaVu Sans', 'Liberation Sans', sans-serif;font-weight:700;letter-spacing:-0.191px;">SPRZEDAŻ</span>
<span class="t" style="left:1025.00px;top:410.00px;font-size:12px;color:#666666;font-family:'DejaVu Sans', 'Liberation Sans', sans-serif;font-weight:700;letter-spacing:-0.119px;">Miesiąc listopad netto 0,00 zł , brutto</span>
<span class="t" style="left:1025.00px;top:438.00px;font-size:12px;color:#666666;font-family:'DejaVu Sans', 'Liberation Sans', sans-serif;font-weight:700;letter-spacing:-0.105px;">0,00 zł</span>
<span class="t" style="left:1025.00px;top:467.00px;font-size:12px;color:#666666;font-family:'DejaVu Sans', 'Liberation Sans', sans-serif;font-weight:700;letter-spacing:-0.068px;">W poprzednim miesiącu netto: 0,00 zł ,</span>
<span class="t" style="left:1025.00px;top:495.00px;font-size:12px;color:#666666;font-family:'DejaVu Sans', 'Liberation Sans', sans-serif;font-weight:700;letter-spacing:-0.084px;">brutto 0,00 zł</span>
<span class="t" style="left:1025.00px;top:524.00px;font-size:12px;color:#666666;font-family:'DejaVu Sans', 'Liberation Sans', sans-serif;font-weight:700;letter-spacing:0.085px;">Największa w 02-2022 brutto 12200,00</span>
<span class="t" style="left:1025.00px;top:552.00px;font-size:12px;color:#666666;font-family:'DejaVu Sans', 'Liberation Sans', sans-serif;font-weight:700;letter-spacing:-0.219px;">zł</span>
<span class="t" style="left:1025.00px;top:600.00px;font-size:12px;color:#111;font-family:'DejaVu Sans', 'Liberation Sans', sans-serif;font-weight:700;letter-spacing:0.095px;">NALEŻNOŚCI</span>
<span class="t" style="left:997.50px;top:691.20px;font-size:11px;color:#fff;font-family:'DejaVu Sans', 'Liberation Sans', sans-serif;letter-spacing:0.274px;">Copyright 2022 by RAFSOFT.NET. Wszystkie prawa zastrzeżone.</span>
<span class="t" style="left:508.75px;top:713.00px;font-size:12px;color:#fff;letter-spacing:-0.225px;">2022-11-09</span>
</div>
<div style="left:1000px;top:606.3px;width:348px;height:17px;background:#fff;border-radius:0 0 3px 3px"></div>
<div id="dlg">
  <div class="tb"></div>
  <div class="inp" style="left:65px"></div>
  <div class="inp" style="left:188px"></div>
  <div class="inp" style="left:297px"></div>
  <div id="grid">
    <div class="row" style="top:0"></div>
    <div class="row" style="top:40px"></div>
    <div class="row" style="top:80px"></div>
    <div class="row" style="top:120px"></div>
    <div class="vl" style="left:85px"></div>
    <div class="vl" style="left:171px"></div>
    <div class="vl" style="left:257px"></div>
  </div>
  <div class="hd sel" style="left:9px;width:84.9px"></div>
  <div class="hd" style="left:95.4px;width:84.4px"></div>
  <div class="hd" style="left:181px;width:84.6px"></div>
  <div class="btn foc" style="top:33px"></div>
  <div class="btn" style="top:73px"></div>
  <div class="btn" style="top:113px"></div>
  <div class="btn" style="top:329px"></div>
  <div style="left:361px;top:175px;width:13px;height:13px;background:#fff;border:1px solid #333"></div>
</div>
<svg style="left:0px;top:0px" width="1366" height="729" viewBox="0 0 1366 729"><defs><linearGradient id="dPg" x1="0" y1="0" x2="0" y2="1"><stop offset="0" stop-color="#ffffff"/><stop offset="1" stop-color="#e4e4f0"/></linearGradient><linearGradient id="dGr" x1="0" y1="0" x2="0" y2="1"><stop offset="0" stop-color="#8ce05c"/><stop offset="1" stop-color="#2ca41c"/></linearGradient><linearGradient id="dRd" x1="0" y1="0" x2="0" y2="1"><stop offset="0" stop-color="#f89070"/><stop offset="1" stop-color="#e0401c"/></linearGradient><linearGradient id="dLb" x1="0" y1="0" x2="1" y2="1"><stop offset="0" stop-color="#f4f4f4"/><stop offset="1" stop-color="#b8b8b8"/></linearGradient></defs><path d="M884.8,186.2 L894.8,196.2 M894.8,186.2 L884.8,196.2" stroke="#111" stroke-width="1.1"/><path d="M540.4,259.2 H550.2 L545.3,253.2 Z" fill="#0808c8"/><path d="M822.4,361.2 L825.3,364.1 L831,357.6" fill="none" stroke="#444" stroke-width="1.3"/><path d="M837.2,220.4 H844.6 L848.6,224.4 V235.6 H837.2 Z" fill="url(#dPg)" stroke="#8c8c94" stroke-width=".9"/><path d="M844.6,220.4 V224.4 H848.6" fill="#fff" stroke="#8c8c94" stroke-width=".8"/><rect x="838.9000000000001" y="223.4" width="1" height="1" fill="#555"/><path d="M841.0,223.9 H845.2" stroke="#9aa0b0" stroke-width=".9"/><rect x="838.9000000000001" y="226.4" width="1" height="1" fill="#555"/><path d="M841.0,226.9 H845.2" stroke="#9aa0b0" stroke-width=".9"/><rect x="838.9000000000001" y="229.4" width="1" height="1" fill="#555"/><path d="M841.0,229.9 H845.2" stroke="#9aa0b0" stroke-width=".9"/><rect x="838.9000000000001" y="232.4" width="1" height="1" fill="#555"/><path d="M841.0,232.9 H845.2" stroke="#9aa0b0" stroke-width=".9"/><path d="M846.4,226.2 H849.8 V229.2 H853 V232.6 H849.8 V235.6 H846.4 V232.6 H843.2 V229.2 H846.4 Z" fill="url(#dGr)" stroke="#2c8c1c" stroke-width=".8"/><path d="M838.2,260.4 H845.6 L849.6,264.4 V275.59999999999997 H838.2 Z" fill="url(#dPg)" stroke="#8c8c94" stroke-width=".9"/><path d="M845.6,260.4 V264.4 H849.6" fill="#fff" stroke="#8c8c94" stroke-width=".8"/><rect x="839.9000000000001" y="263.4" width="1" height="1" fill="#555"/><path d="M842.0,263.9 H846.2" stroke="#9aa0b0" stroke-width=".9"/><rect x="839.9000000000001" y="266.4" width="1" height="1" fill="#555"/><path d="M842.0,266.9 H846.2" stroke="#9aa0b0" stroke-width=".9"/><rect x="839.9000000000001" y="269.4" width="1" height="1" fill="#555"/><path d="M842.0,269.9 H846.2" stroke="#9aa0b0" stroke-width=".9"/><rect x="839.9000000000001" y="272.4" width="1" height="1" fill="#555"/><path d="M842.0,272.9 H846.2" stroke="#9aa0b0" stroke-width=".9"/><rect x="844.2" y="269.2" width="9.6" height="3.5" fill="url(#dRd)" stroke="#c43c1c" stroke-width=".8"/><path d="M836.2,301.2 H849.8 V314.6 H837.4 L836.2,313.4 Z" fill="#1c1c1c"/><rect x="838.6" y="302" width="8.6" height="6.2" fill="url(#dLb)"/><rect x="839.6" y="310.2" width="8.4" height="4.4" fill="#3c3c3c"/><rect x="844.8" y="311" width="2" height="3" fill="#fff"/><rect x="848.4" y="302" width=".9" height=".9" fill="#ddd"/></svg>
<div id="dt" style="left:0;top:0;width:1366px;height:729px;will-change:transform">
<span class="t" style="left:463.00px;top:185.00px;font-size:12px;color:#000000;letter-spacing:-0.064px;">Lista walut</span>
<span class="t" style="left:468.60px;top:216.25px;font-size:12px;color:#000000;transform:scaleX(0.8790);transform-origin:0 0;">Kod waluty</span>
<span class="t" style="left:593.00px;top:216.25px;font-size:12px;color:#000000;transform:scaleX(0.8994);transform-origin:0 0;">Jednostka</span>
<span class="t" style="left:716.40px;top:216.25px;font-size:12px;color:#000000;transform:scaleX(0.8478);transform-origin:0 0;">Grosze</span>
<span class="t" style="left:471.80px;top:250.00px;font-size:12px;color:#000000;transform:scaleX(0.8858);transform-origin:0 0;">Kod waluty</span>
<span class="t" style="left:557.00px;top:250.00px;font-size:12px;color:#000000;transform:scaleX(0.9067);transform-origin:0 0;">Jednostka</span>
<span class="t" style="left:643.40px;top:250.00px;font-size:12px;color:#000000;transform:scaleX(0.8582);transform-origin:0 0;">Grosze</span>
<span class="t" style="left:856.30px;top:222.80px;font-size:12px;color:#000000;transform:scaleX(0.9056);transform-origin:0 0;"><u>D</u>odaj</span>
<span class="t" style="left:857.30px;top:262.80px;font-size:12px;color:#000000;transform:scaleX(0.8954);transform-origin:0 0;"><u>U</u>suń</span>
<span class="t" style="left:853.70px;top:302.80px;font-size:12px;color:#000000;transform:scaleX(0.8961);transform-origin:0 0;">Z<u>a</u>pisz</span>
<span class="t" style="left:841.00px;top:519.50px;font-size:12px;color:#000000;transform:scaleX(0.9160);transform-origin:0 0;"><u>Z</u>amknij</span>
<span class="t" style="left:836.40px;top:335.00px;font-size:12px;color:#000000;transform:scaleX(0.8963);transform-origin:0 0;">Drukowanie</span>
<span class="t" style="left:836.40px;top:347.80px;font-size:12px;color:#000000;transform:scaleX(0.8926);transform-origin:0 0;">na fakturze</span>
<span class="t" style="left:836.40px;top:360.70px;font-size:12px;color:#000000;transform:scaleX(0.8865);transform-origin:0 0;">jednostki</span>
<span class="t" style="left:836.40px;top:373.60px;font-size:12px;color:#000000;transform:scaleX(0.8819);transform-origin:0 0;">waluty</span>
<span class="t" style="left:501.13px;top:271.20px;font-size:12px;color:#000000;transform:scaleX(0.8800);transform-origin:0 0;">PLN</span>
<span class="t" style="left:593.48px;top:271.20px;font-size:12px;color:#000000;transform:scaleX(0.8800);transform-origin:0 0;">zł</span>
<span class="t" style="left:678.80px;top:271.20px;font-size:12px;color:#000000;transform:scaleX(0.8800);transform-origin:0 0;">gr</span>
<span class="t" style="left:500.25px;top:291.20px;font-size:12px;color:#000000;transform:scaleX(0.8800);transform-origin:0 0;">EUR</span>
<span class="t" style="left:594.36px;top:291.20px;font-size:12px;color:#000000;transform:scaleX(0.8800);transform-origin:0 0;">€</span>
<span class="t" style="left:680.86px;top:291.20px;font-size:12px;color:#000000;transform:scaleX(0.8800);transform-origin:0 0;">c</span>
<span class="t" style="left:500.25px;top:311.20px;font-size:12px;color:#000000;transform:scaleX(0.8800);transform-origin:0 0;">USD</span>
<span class="t" style="left:594.36px;top:311.20px;font-size:12px;color:#000000;transform:scaleX(0.8800);transform-origin:0 0;">$</span>
<span class="t" style="left:680.86px;top:311.20px;font-size:12px;color:#000000;transform:scaleX(0.8800);transform-origin:0 0;">c</span>
<span class="t" style="left:500.25px;top:331.20px;font-size:12px;color:#000000;transform:scaleX(0.8800);transform-origin:0 0;">GBP</span>
<span class="t" style="left:594.36px;top:331.20px;font-size:12px;color:#000000;transform:scaleX(0.8800);transform-origin:0 0;">Ł</span>
<span class="t" style="left:680.56px;top:331.20px;font-size:12px;color:#000000;transform:scaleX(0.8800);transform-origin:0 0;">p</span>
<span class="t" style="left:500.84px;top:351.20px;font-size:12px;color:#000000;transform:scaleX(0.8800);transform-origin:0 0;">CZK</span>
<span class="t" style="left:591.13px;top:351.20px;font-size:12px;color:#000000;transform:scaleX(0.8800);transform-origin:0 0;">Kć</span>
<span class="t" style="left:680.56px;top:351.20px;font-size:12px;color:#000000;transform:scaleX(0.8800);transform-origin:0 0;">h</span>
<span class="t" style="left:500.54px;top:371.20px;font-size:12px;color:#000000;transform:scaleX(0.8800);transform-origin:0 0;">DKK</span>
<span class="t" style="left:592.90px;top:371.20px;font-size:12px;color:#000000;transform:scaleX(0.8800);transform-origin:0 0;">kr</span>
<span class="t" style="left:500.83px;top:391.20px;font-size:12px;color:#000000;transform:scaleX(0.8800);transform-origin:0 0;">SEK</span>
<span class="t" style="left:592.90px;top:391.20px;font-size:12px;color:#000000;transform:scaleX(0.8800);transform-origin:0 0;">kr</span>
<span class="t" style="left:675.87px;top:391.20px;font-size:12px;color:#000000;transform:scaleX(0.8800);transform-origin:0 0;">ore</span>
</div>

</body>
</html>
